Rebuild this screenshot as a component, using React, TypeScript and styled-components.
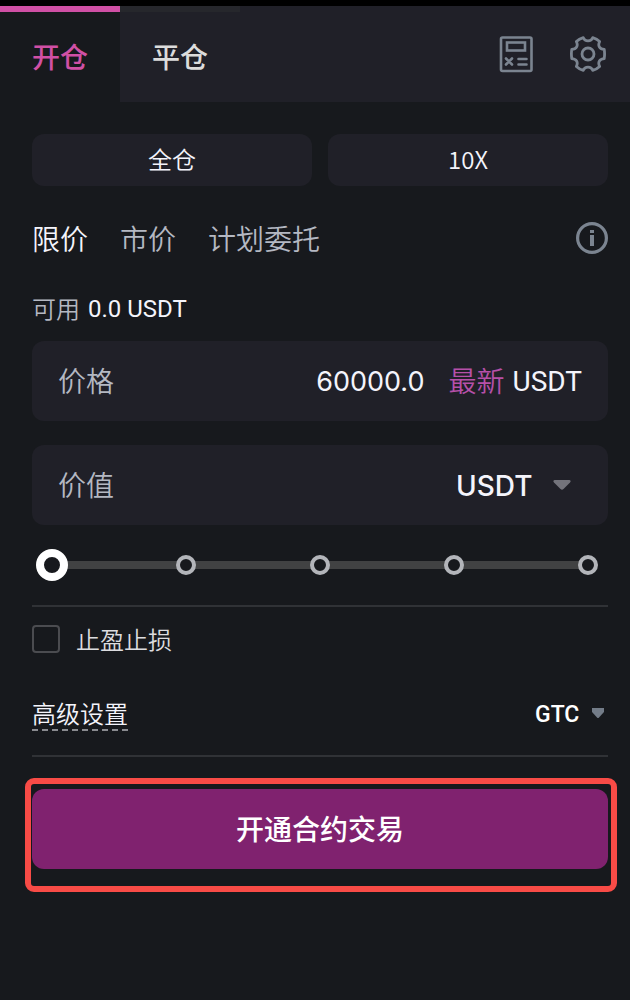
import React, { useState } from "react";
import styled, { createGlobalStyle } from "styled-components";

const color = {
  page: "#17191d",
  panel: "#202028",
  pink: "#d050a5",
  violet: "#b650a9",
  text: "#f4f4fb",
  muted: "#b4b8c2",
  icon: "#7b8490",
  line: "#303236",
  action: "#80226f",
  alert: "#f84b46",
};

const cjk = `"Noto Sans CJK SC", sans-serif`;
const latin = `Roboto, ${cjk}`;
const numeric = `Inter, ${cjk}`;

const GlobalStyle = createGlobalStyle`
  *, *::before, *::after { box-sizing: border-box; }
  body { margin: 0; background: ${color.page}; }
  button, input, select { font: inherit; color: inherit; margin: 0; padding: 0; border: 0; background: none; }
  button, select { cursor: pointer; }
`;

const Page = styled.div`
  min-height: 100vh;
  background: ${color.page};
  color: ${color.text};
  font-family: ${cjk};
  font-weight: 350;
  border-top: 6px solid #000;
`;

const Header = styled.header`
  display: flex;
  justify-content: space-between;
  height: 96px;
  background: ${color.panel};
`;

const Tabs = styled.nav`
  display: flex;
`;

const Tab = styled.button<{ $active?: boolean }>`
  width: 120px;
  padding-bottom: 2px;
  border-top: 6px solid ${(p) => (p.$active ? color.pink : "#26272c")};
  background: ${(p) => (p.$active ? color.page : "transparent")};
  color: ${(p) => (p.$active ? color.pink : "#dcdcdc")};
  font-size: 28px;
  font-weight: 500;
`;

const Tools = styled.div`
  display: flex;
  align-items: center;
  gap: 36px;
  padding-right: 24px;
`;

const IconButton = styled.button`
  display: flex;
  color: ${color.icon};
`;

const Form = styled.form`
  display: flex;
  flex-direction: column;
  padding: 32px 22px 32px 32px;
`;

const ModeRow = styled.div`
  display: flex;
  gap: 16px;
`;

const ModeButton = styled.button`
  flex: 1;
  height: 52px;
  padding-bottom: 2px;
  border-radius: 12px;
  background: ${color.panel};
  font-size: 24px;
  line-height: 48px;
`;

const OrderTypes = styled.div`
  display: flex;
  align-items: center;
  gap: 32px;
  height: 40px;
  margin-top: 32px;
`;

const OrderType = styled.button<{ $active?: boolean }>`
  color: ${(p) => (p.$active ? color.text : color.muted)};
  font-size: 28px;
  line-height: 40px;
`;

const InfoButton = styled(IconButton)`
  margin-left: auto;
`;

const Available = styled.p`
  display: flex;
  gap: 8px;
  margin: 32px 0 0;
  color: ${color.muted};
  font-size: 24px;
  line-height: 36px;
`;

const Amount = styled.span`
  color: ${color.text};
  font-family: ${latin};
  font-weight: 400;
  line-height: 38px;
`;

const Field = styled.div`
  display: flex;
  align-items: center;
  height: 80px;
  margin-top: 24px;
  padding: 0 26px;
  border-radius: 12px;
  background: ${color.panel};
  font-size: 28px;
  line-height: 40px;

  ${Available} + & {
    margin-top: 13px;
  }
`;

const FieldLabel = styled.label`
  flex: none;
  padding-bottom: 2px;
  color: ${color.muted};
`;

const PriceInput = styled.input`
  flex: 1;
  min-width: 0;
  padding-top: 2px;
  margin-right: 24px;
  outline: none;
  font-family: ${numeric};
  font-size: 27px;
  font-weight: 400;
  text-align: right;
`;

const LatestButton = styled.button`
  padding-bottom: 2px;
  margin-right: 8px;
  color: ${color.violet};
`;

const Unit = styled.span`
  padding-top: 2px;
  font-family: ${latin};
  font-weight: 400;
`;

const Picker = styled.span`
  display: flex;
  align-items: center;
  margin-left: auto;
`;

const UnitSelect = styled.select`
  appearance: none;
  margin-right: 20px;
  padding-top: 2px;
  font-family: ${numeric};
  font-size: 28px;
  font-weight: 450;
  outline: none;
`;

const UnitPicker = styled(Picker)`
  padding-right: 11px;
`;

const Slider = styled.div`
  display: grid;
  align-items: center;
  height: 32px;
  margin: 24px 4px;

  & > * {
    grid-area: 1 / 1;
  }
`;

const Track = styled.div`
  height: 8px;
  margin: 0 16px;
  background: #414243;
`;

const Steps = styled.div`
  display: flex;
  justify-content: space-between;
  padding: 0 6px;
`;

const Step = styled.span`
  width: 20px;
  height: 20px;
  border: 4px solid #b3b5ba;
  border-radius: 50%;
  background: ${color.page};
`;

const Range = styled.input`
  appearance: none;
  width: 100%;
  height: 32px;
  outline: none;

  &::-webkit-slider-thumb {
    appearance: none;
    width: 32px;
    height: 32px;
    border: 8px solid #fff;
    border-radius: 50%;
    background: ${color.page};
  }
`;

const Divider = styled.hr`
  width: 100%;
  height: 2px;
  margin: 0;
  border: 0;
  background: ${color.line};
`;

const StopRow = styled.label`
  display: flex;
  align-items: center;
  align-self: flex-start;
  gap: 16px;
  height: 36px;
  margin-top: 14px;
  color: #dcdcdf;
  font-size: 24px;
`;

const StopText = styled.span`
  padding-bottom: 2px;
`;

const CheckBox = styled.input`
  appearance: none;
  width: 28px;
  height: 28px;
  border: 2px solid #4b4c50;
  border-radius: 4px;

  &:checked {
    background: ${color.pink};
  }
`;

const AdvancedRow = styled.div`
  display: flex;
  align-items: flex-start;
  justify-content: space-between;
  height: 58px;
  margin-top: 40px;
  font-size: 24px;
  line-height: 32px;
`;

const AdvancedButton = styled.button`
  display: flex;
  flex-direction: column;
`;

const Dashes = styled.span`
  width: 100%;
  height: 2px;
  background: repeating-linear-gradient(90deg, #8a8b90 0 6px, transparent 6px 10px);
`;

const ForceSelect = styled.select`
  appearance: none;
  margin-right: 12px;
  color: #fff;
  font-family: ${latin};
  font-size: 23px;
  font-weight: 500;
  outline: none;
`;

const ForcePicker = styled(Picker)`
  padding: 2px 4px 0 0;
`;

const SubmitArea = styled.div`
  position: relative;
  margin-top: 32px;
`;

const Submit = styled.button`
  width: 100%;
  height: 80px;
  padding-bottom: 2px;
  border-radius: 12px;
  background: ${color.action};
  color: #fff;
  font-size: 28px;
  font-weight: 500;
`;

const Highlight = styled.div`
  position: absolute;
  inset: -11px -9px -23px -7px;
  border: 6px solid ${color.alert};
  border-radius: 9px;
  pointer-events: none;
`;

const CalculatorIcon = () => (
  <svg width="36" height="38" viewBox="0 0 36 38" fill="none" stroke="currentColor" strokeWidth="2.6">
    <rect x="3" y="2.500" width="30.500" height="33.500" rx="1.500" />
    <rect x="9" y="7.500" width="18" height="8" />
    <path d="M8 23.500l6 6M14 23.500l-6 6M20.500 24h8M20.500 29.500h8" strokeLinecap="round" />
  </svg>
);

const GearIcon = () => (
  <svg width="36" height="36" viewBox="0 0 36 36" fill="none" stroke="currentColor" strokeWidth="2.8" strokeLinejoin="round">
    <circle cx="18" cy="18" r="6" />
    <path d="M13.300 1.700C15 6 21 6 22.700 1.700Q27 3 29.600 5.600C27.500 9.800 29.600 13 34.200 13.300Q35 18 34.200 22.700C29.600 23 27.500 26.200 29.600 30.400Q27 33 22.700 34.300C21 30 15 30 13.300 34.300Q9 33 6.400 30.400C8.500 26.200 6.400 23 1.800 22.700Q1 18 1.800 13.300C6.400 13 8.500 9.800 6.400 5.600Q9 3 13.300 1.700Z" />
  </svg>
);

const InfoIcon = () => (
  <svg width="32" height="32" viewBox="0 0 32 32" fill="none" stroke="currentColor">
    <circle cx="16" cy="16" r="14.400" strokeWidth="3.200" />
    <path d="M16 8v3M16 13v11" strokeWidth="4" />
  </svg>
);

const UnitCaret = () => (
  <svg width="18" height="10" viewBox="0 0 18 10" fill="#73737b" aria-hidden="true">
    <path d="M1.500 0H16.500Q18.500 1 17 2.500L10.500 9Q9 10.500 7.500 9L1 2.500Q-.5 1 1.500 0Z" />
  </svg>
);

const ForceCaret = () => (
  <svg width="12" height="14" viewBox="0 0 12 14" fill="#737c88" aria-hidden="true">
    <path d="M0 0H12V4L7 9.500Q6 10.500 5 9.500L0 4Z" />
  </svg>
);

export default function App() {
  const [price, setPrice] = useState("60000.0");
  const [percent, setPercent] = useState(0);

  return (
    <>
      <GlobalStyle />
      <Page>
        <Header>
          <Tabs>
            <Tab type="button" $active>开仓</Tab>
            <Tab type="button">平仓</Tab>
          </Tabs>
          <Tools>
            <IconButton type="button" aria-label="计算器"><CalculatorIcon /></IconButton>
            <IconButton type="button" aria-label="设置"><GearIcon /></IconButton>
          </Tools>
        </Header>
        <Form onSubmit={(e) => e.preventDefault()}>
          <ModeRow>
            <ModeButton type="button">全仓</ModeButton>
            <ModeButton type="button">10X</ModeButton>
          </ModeRow>
          <OrderTypes>
            <OrderType type="button" $active>限价</OrderType>
            <OrderType type="button">市价</OrderType>
            <OrderType type="button">计划委托</OrderType>
            <InfoButton type="button" aria-label="说明"><InfoIcon /></InfoButton>
          </OrderTypes>
          <Available>
            可用 <Amount>0.0 USDT</Amount>
          </Available>
          <Field>
            <FieldLabel htmlFor="price">价格</FieldLabel>
            <PriceInput id="price" inputMode="decimal" value={price} onChange={(e) => setPrice(e.target.value)} />
            <LatestButton type="button">最新</LatestButton>
            <Unit>USDT</Unit>
          </Field>
          <Field>
            <FieldLabel htmlFor="unit">价值</FieldLabel>
            <UnitPicker>
              <UnitSelect id="unit">
                <option>USDT</option>
              </UnitSelect>
              <UnitCaret />
            </UnitPicker>
          </Field>
          <Slider>
            <Track />
            <Steps>
              {[0, 25, 50, 75, 100].map((n) => (
                <Step key={n} />
              ))}
            </Steps>
            <Range
              type="range"
              min={0}
              max={100}
              value={percent}
              aria-label="仓位比例"
              onChange={(e) => setPercent(Number(e.target.value))}
            />
          </Slider>
          <Divider />
          <StopRow>
            <CheckBox type="checkbox" />
            <StopText>止盈止损</StopText>
          </StopRow>
          <AdvancedRow>
            <AdvancedButton type="button">
              高级设置
              <Dashes />
            </AdvancedButton>
            <ForcePicker>
              <ForceSelect aria-label="有效方式">
                <option>GTC</option>
              </ForceSelect>
              <ForceCaret />
            </ForcePicker>
          </AdvancedRow>
          <Divider />
          <SubmitArea>
            <Submit type="submit">开通合约交易</Submit>
            <Highlight />
          </SubmitArea>
        </Form>
      </Page>
    </>
  );
}
